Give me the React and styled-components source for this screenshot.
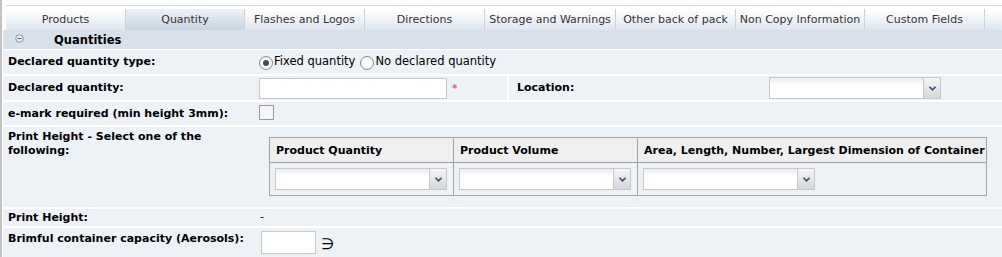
import React from 'react';
import styled, { createGlobalStyle } from 'styled-components';

const GlobalStyle = createGlobalStyle`
  html, body {
    margin: 0;
    padding: 0;
    background: #ffffff;
  }
  body {
    font-family: 'DejaVu Sans', Verdana, sans-serif;
    font-size: 11px;
    color: #000;
  }
`;

const tabs = [
  { label: 'Products', width: 120 },
  { label: 'Quantity', width: 119, active: true },
  { label: 'Flashes and Logos', width: 120 },
  { label: 'Directions', width: 120 },
  { label: 'Storage and Warnings', width: 131 },
  { label: 'Other back of pack', width: 120 },
  { label: 'Non Copy Information', width: 129 },
  { label: 'Custom Fields', width: 120 },
];

function App() {
  return (
    <>
      <GlobalStyle />
      <Page>
        <TopStrip />
        <TabBar>
          {tabs.map((t) => (
            <Tab key={t.label} $width={t.width} $active={t.active}>
              {t.label}
            </Tab>
          ))}
          <TabFill />
        </TabBar>
        <SectionHeader>
          <CollapseIcon />
          <SectionTitle>Quantities</SectionTitle>
        </SectionHeader>
        <Rows>
          <Row $height={24}>
            <LabelCell>Declared quantity type:</LabelCell>
            <ValueCell>
              <RadioGroup>
                <RadioOption>
                  <Radio $checked />
                  Fixed quantity
                </RadioOption>
                <RadioOption>
                  <Radio />
                  No declared quantity
                </RadioOption>
              </RadioGroup>
            </ValueCell>
          </Row>
          <Row $height={24}>
            <LabelCell>Declared quantity:</LabelCell>
            <ValueCell $width={248} $align="center">
              <TextInput $width={188} $height={21} />
              <Required>*</Required>
            </ValueCell>
            <Gap />
            <LabelCell $width={260} $pad={8}>Location:</LabelCell>
            <ValueCell $align="center">
              <Select width={172} />
            </ValueCell>
          </Row>
          <Row $height={23}>
            <LabelCell>e-mark required (min height 3mm):</LabelCell>
            <ValueCell $align="center">
              <Checkbox />
            </ValueCell>
          </Row>
          <Row $height={80}>
            <LabelCell $wrap>Print Height - Select one of the following:</LabelCell>
            <ValueCell $pad={10} $top={10}>
              <HeightTable>
                <thead>
                  <tr>
                    <HeadCell $width={184}>Product Quantity</HeadCell>
                    <HeadCell $width={184}>Product Volume</HeadCell>
                    <HeadCell>Area, Length, Number, Largest Dimension of Container</HeadCell>
                  </tr>
                </thead>
                <tbody>
                  <tr>
                    <DataCell><Select width={172} /></DataCell>
                    <DataCell><Select width={172} /></DataCell>
                    <DataCell><Select width={172} /></DataCell>
                  </tr>
                </tbody>
              </HeightTable>
            </ValueCell>
          </Row>
          <Row $height={17}>
            <LabelCell>Print Height:</LabelCell>
            <ValueCell $plain>-</ValueCell>
          </Row>
          <Row $height={30}>
            <LabelCell $top={4}>Brimful container capacity (Aerosols):</LabelCell>
            <ValueCell $pad={2} $top={3}>
              <TextInput $width={55} $height={23} />
              <Symbol>∋</Symbol>
            </ValueCell>
          </Row>
        </Rows>
        <BottomLine />
      </Page>
    </>
  );
}

export default App;

function CollapseIcon() {
  return (
    <IconBox>
      <svg width="9" height="9" viewBox="0 0 9 9">
        <circle cx="4.5" cy="4.5" r="3.8" fill="#e6ecf2" stroke="#8796a6" strokeWidth="1" />
        <line x1="2.5" y1="4.5" x2="6.5" y2="4.5" stroke="#5d6d7e" strokeWidth="1" />
      </svg>
    </IconBox>
  );
}

function Select({ width }) {
  return (
    <SelectBox $width={width}>
      <SelectField />
      <SelectButton>
        <svg width="7" height="5" viewBox="0 0 7 5">
          <path d="M0.5 0.8 L3.5 3.8 L6.5 0.8" fill="none" stroke="#3b4f7c" strokeWidth="1.6" />
        </svg>
      </SelectButton>
    </SelectBox>
  );
}

const Page = styled.div`
  width: 1002px;
  height: 257px;
  box-sizing: border-box;
  border-left: 2px solid #c3c3c3;
  padding-left: 1px;
  overflow: hidden;
`;

const TopStrip = styled.div`
  height: 5px;
  margin-left: 3px;
  border-bottom: 1px solid #d3dbe3;
  margin-bottom: 3px;
`;

const TabBar = styled.div`
  display: flex;
  height: 21px;
  margin-left: 3px;
  background: linear-gradient(#ffffff, #dfe7ef);
`;

const Tab = styled.div`
  flex: 0 0 ${(p) => p.$width}px;
  display: flex;
  align-items: center;
  justify-content: center;
  box-sizing: border-box;
  border-right: 1px solid #c8d4e0;
  color: #333;
  font-size: 11px;
  white-space: nowrap;
  background: ${(p) => (p.$active ? 'linear-gradient(#eef2f6, #c7d4e1)' : 'transparent')};
`;

const TabFill = styled.div`
  flex: 1;
`;

const SectionHeader = styled.div`
  display: flex;
  align-items: center;
  height: 19px;
  background: #d8e1ea;
`;

const IconBox = styled.span`
  display: flex;
  margin-left: 12px;
  margin-top: -2px;
`;

const SectionTitle = styled.span`
  margin-left: 30px;
  font-weight: bold;
  font-size: 11.5px;
`;

const Rows = styled.div`
  display: flex;
  flex-direction: column;
  gap: 2px;
  padding-top: 1px;
`;

const Row = styled.div`
  display: flex;
  height: ${(p) => p.$height}px;
  background: #edf2f7;
`;

const LabelCell = styled.div`
  flex: 0 0 ${(p) => p.$width || 256}px;
  box-sizing: border-box;
  padding-left: ${(p) => p.$pad || 5}px;
  padding-right: 10px;
  padding-top: ${(p) => (p.$top !== undefined ? p.$top : 0)}px;
  display: flex;
  align-items: ${(p) => (p.$wrap || p.$top !== undefined ? 'flex-start' : 'center')};
  font-weight: bold;
  line-height: 14px;
  ${(p) => p.$wrap && 'padding-top: 3px;'}
`;

const ValueCell = styled.div`
  ${(p) => (p.$width ? `flex: 0 0 ${p.$width}px;` : 'flex: 1;')}
  display: flex;
  align-items: ${(p) => (p.$top !== undefined ? 'flex-start' : 'center')};
  padding-left: ${(p) => p.$pad || 0}px;
  padding-top: ${(p) => p.$top || 0}px;
  ${(p) => p.$plain && 'padding-left: 1px; padding-bottom: 2px;'}
`;

const Gap = styled.div`
  flex: 0 0 2px;
  background: #ffffff;
`;

const RadioGroup = styled.div`
  display: flex;
  gap: 5px;
  margin-top: -3px;
`;

const RadioOption = styled.label`
  display: flex;
  align-items: center;
  gap: 1px;
  font-size: 11.5px;
`;

const Radio = styled.span`
  width: 12px;
  height: 12px;
  border-radius: 50%;
  border: 1px solid #8c8c8c;
  background: radial-gradient(circle, #ffffff 40%, #e6e6e6 100%);
  position: relative;
  margin-top: 4px;

  &::after {
    content: '';
    display: ${(p) => (p.$checked ? 'block' : 'none')};
    position: absolute;
    left: 3px;
    top: 3px;
    width: 6px;
    height: 6px;
    border-radius: 50%;
    background: #4a4a4a;
  }
`;

const TextInput = styled.div`
  width: ${(p) => p.$width}px;
  height: ${(p) => p.$height}px;
  box-sizing: border-box;
  border: 1px solid #c8c8c8;
  background: #ffffff;
`;

const Required = styled.span`
  color: #e8262a;
  margin-left: 5px;
  font-size: 11px;
`;

const Checkbox = styled.span`
  width: 13px;
  height: 13px;
  border: 1px solid #9a9a9a;
  background: #f6f6f6;
  margin-top: -2px;
`;

const HeightTable = styled.table`
  border-collapse: collapse;
  width: 718px;
  font-size: 11px;
`;

const HeadCell = styled.th`
  ${(p) => p.$width && `width: ${p.$width}px;`}
  height: 25px;
  box-sizing: border-box;
  border: 1px solid #a3a3a3;
  background: #efefef;
  text-align: left;
  padding: 0 0 0 6px;
  font-weight: bold;
  white-space: nowrap;
`;

const DataCell = styled.td`
  height: 33px;
  box-sizing: border-box;
  border: 1px solid #a3a3a3;
  padding: 0 0 0 5px;
  vertical-align: middle;
`;

const SelectBox = styled.div`
  display: flex;
  width: ${(p) => p.$width}px;
  height: 22px;
  box-sizing: border-box;
  border: 1px solid #c6c9cc;
  background: #fff;
`;

const SelectField = styled.div`
  flex: 1;
  background: linear-gradient(#ececec 0px, #ffffff 7px, #ffffff);
`;

const SelectButton = styled.div`
  flex: 0 0 16px;
  display: flex;
  align-items: center;
  justify-content: center;
  border-left: 1px solid #c6c9cc;
  background: linear-gradient(#f6f6f6, #d6d6d6);
`;

const Symbol = styled.span`
  margin-left: 5px;
  margin-top: 6px;
  font-size: 15px;
  line-height: 15px;
`;

const BottomLine = styled.div`
  height: 2px;
  margin-top: 1px;
  background: #cfdceb;
`;
